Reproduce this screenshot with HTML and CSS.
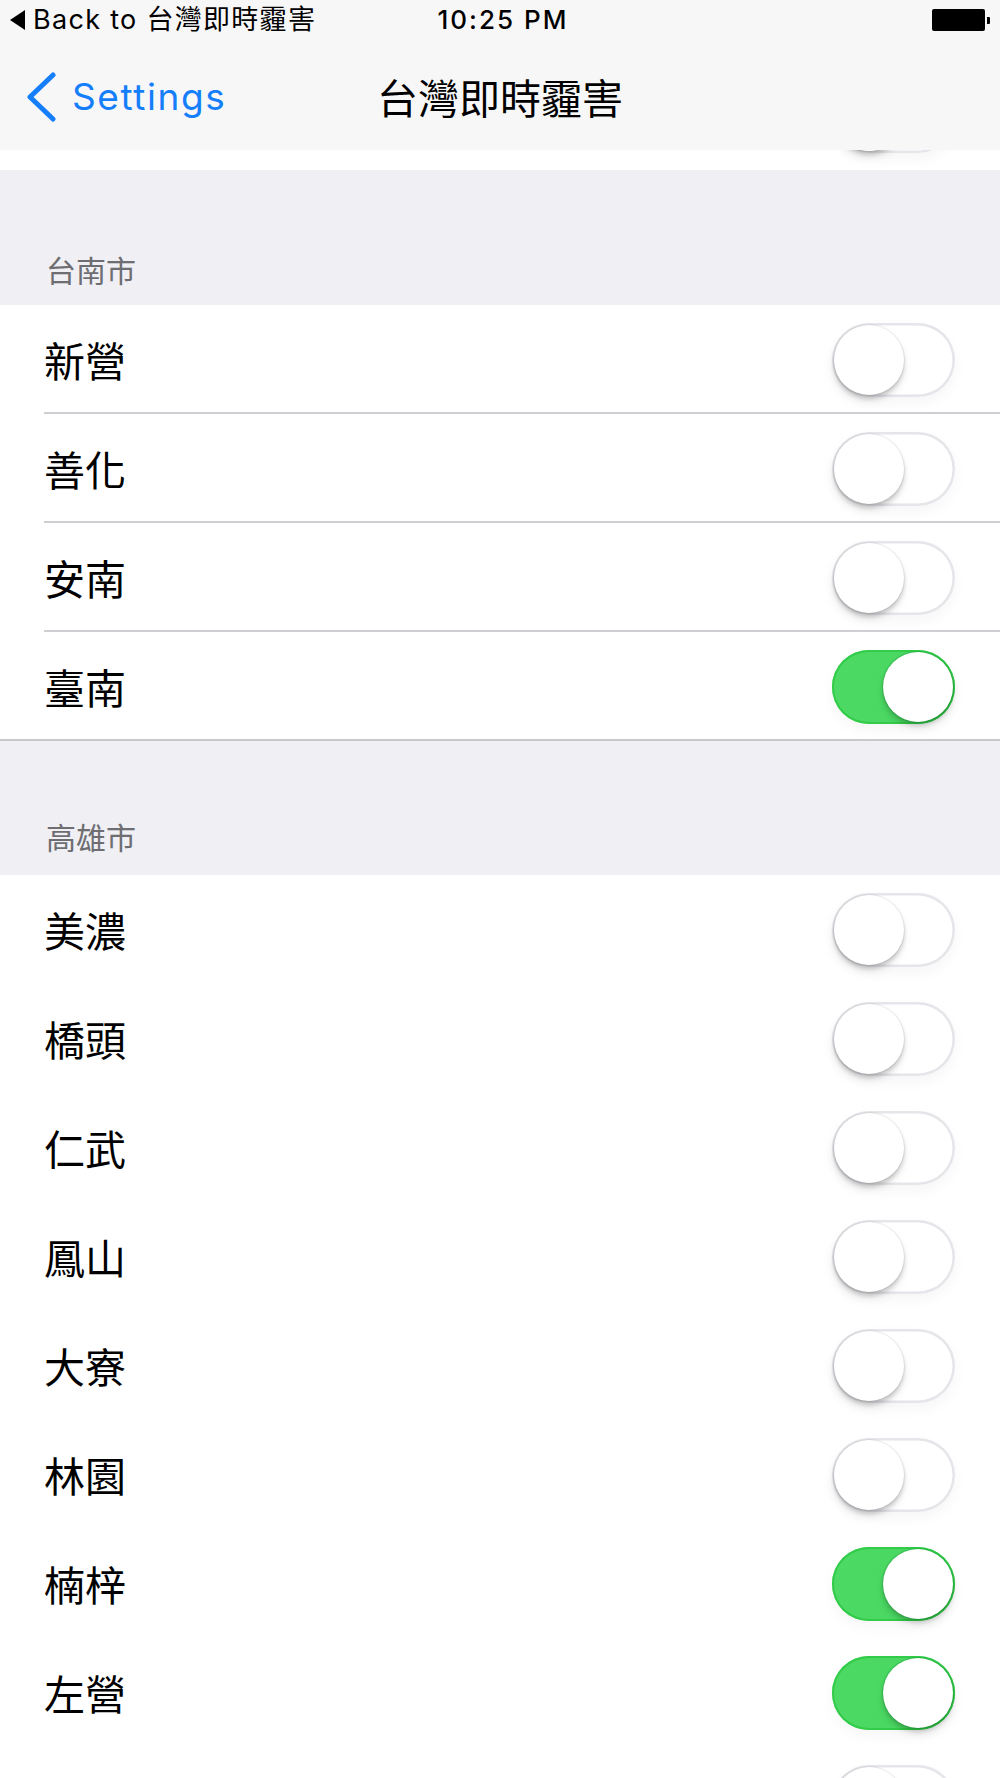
FILE: index.html
```html
<!DOCTYPE html>
<html lang="zh-Hant">
<head>
<meta charset="utf-8">
<title>台灣即時霾害</title>
<link rel="stylesheet" href="styles.css">
</head>
<body>
<div class="screen">
  <header class="top">
    <div class="status">
      <div class="status-left"><span class="tri"></span><span class="back">Back to 台灣即時霾害</span></div>
      <div class="time">10:25 PM</div>
      <div class="status-right"><span class="battery"></span><span class="nub"></span></div>
    </div>
    <nav class="nav">
      <div class="nav-left">
        <svg class="chev" width="32" height="50" viewBox="0 0 32 50"><polyline points="28,3 5,25 28,47" fill="none" stroke="#147efb" stroke-width="5" stroke-linecap="round" stroke-linejoin="round"/></svg>
        <span class="nav-back">Settings</span>
      </div>
      <div class="nav-title">台灣即時霾害</div>
      <div></div>
    </nav>
  </header>

  <div class="peek">
    <div class="row row-plain"><span class="label"></span><span class="switch"><span class="knob"></span></span></div>
  </div>

  <div class="section-header">台南市</div>
  <div class="group lined">
    <div class="row"><span class="label">新營</span><span class="switch"><span class="knob"></span></span></div>
    <div class="row"><span class="label">善化</span><span class="switch"><span class="knob"></span></span></div>
    <div class="row"><span class="label">安南</span><span class="switch"><span class="knob"></span></span></div>
    <div class="row"><span class="label">臺南</span><span class="switch on"><span class="knob"></span></span></div>
  </div>

  <div class="section-header second">高雄市</div>
  <div class="group">
    <div class="row row-plain"><span class="label">美濃</span><span class="switch"><span class="knob"></span></span></div>
    <div class="row row-plain"><span class="label">橋頭</span><span class="switch"><span class="knob"></span></span></div>
    <div class="row row-plain"><span class="label">仁武</span><span class="switch"><span class="knob"></span></span></div>
    <div class="row row-plain"><span class="label">鳳山</span><span class="switch"><span class="knob"></span></span></div>
    <div class="row row-plain"><span class="label">大寮</span><span class="switch"><span class="knob"></span></span></div>
    <div class="row row-plain"><span class="label">林園</span><span class="switch"><span class="knob"></span></span></div>
    <div class="row row-plain"><span class="label">楠梓</span><span class="switch on"><span class="knob"></span></span></div>
    <div class="row row-plain"><span class="label">左營</span><span class="switch on"><span class="knob"></span></span></div>
    <div class="row row-plain"><span class="label"></span><span class="switch"><span class="knob"></span></span></div>
  </div>
</div>
</body>
</html>
```

FILE: styles.css
```css
* { box-sizing: border-box; }

html, body {
  margin: 0;
  padding: 0;
}

body {
  width: 1000px;
  height: 1778px;
  overflow: hidden;
  background: #efeff4;
  font-family: "Inter", "Noto Sans CJK TC", sans-serif;
  color: #000;
}

.screen {
  display: flex;
  flex-direction: column;
}

.top {
  background: #f7f7f7;
}

.status {
  display: grid;
  grid-template-columns: 1fr auto 1fr;
  align-items: center;
  height: 40px;
  padding: 0 10px;
}

.status-left {
  display: flex;
  align-items: center;
  gap: 8px;
}

.tri {
  width: 0;
  height: 0;
  border-top: 10px solid transparent;
  border-bottom: 10px solid transparent;
  border-right: 15px solid #000;
}

.back {
  font-size: 27px;
  line-height: 1.2;
  letter-spacing: 1.3px;
  white-space: nowrap;
}

.time {
  font-size: 26px;
  font-weight: 500;
  letter-spacing: 2px;
  line-height: 1.2;
  padding-left: 6px;
}

.status-right {
  display: flex;
  justify-content: flex-end;
  align-items: center;
  gap: 2px;
}

.battery {
  width: 53px;
  height: 22px;
  background: #000;
  border-radius: 2px;
}

.nub {
  width: 3px;
  height: 7px;
  background: #000;
  border-radius: 0 1px 1px 0;
}

.nav {
  display: grid;
  grid-template-columns: 1fr auto 1fr;
  align-items: center;
  height: 110px;
  padding-top: 4px;
}

.nav-left {
  display: flex;
  align-items: center;
  gap: 15px;
  padding-left: 25px;
}

.chev {
  display: block;
}

.nav-back {
  color: #147efb;
  font-size: 37px;
  letter-spacing: 1.6px;
  line-height: 1.2;
}

.nav-title {
  font-family: "Noto Sans CJK TC", sans-serif;
  font-size: 41px;
  font-weight: 400;
  line-height: 1.2;
}

.peek {
  height: 20px;
  overflow: hidden;
  display: flex;
  flex-direction: column;
  justify-content: flex-end;
  background: #fff;
}

.peek .row {
  flex-shrink: 0;
  padding-left: 44px;
}

.section-header {
  height: 135px;
  display: flex;
  align-items: flex-end;
  padding: 0 0 18px 46px;
  color: #6d6d72;
  font-family: "Noto Sans CJK TC", sans-serif;
  font-size: 30px;
  line-height: 36px;
}

.section-header.second {
  height: 134px;
  padding-bottom: 21px;
}

.group {
  background: #fff;
  padding-left: 44px;
}

.group.lined {
  border-bottom: 2px solid #c8c7cc;
}

.row {
  display: flex;
  align-items: center;
  justify-content: space-between;
  height: 109px;
  padding-right: 45px;
}

.group.lined .row {
  height: 109px;
  border-bottom: 2px solid #cfced3;
  padding-top: 2px;
}

.group.lined .row:last-child {
  height: 107px;
  border-bottom: none;
}

.label {
  font-family: "Noto Sans CJK TC", sans-serif;
  font-size: 41px;
  line-height: 1.2;
  color: #000;
}

.switch {
  width: 123px;
  height: 74px;
  border-radius: 37px;
  padding: 2px;
  display: flex;
  align-items: center;
  justify-content: flex-start;
  background: #fff;
  box-shadow: inset 0 0 0 2.5px #e5e5ea, 0 6px 14px rgba(0, 0, 0, 0.04);
  flex-shrink: 0;
}

.switch.on {
  justify-content: flex-end;
  background: linear-gradient(90deg, #4cd964 0%, #4ad862 60%, #3fd158 100%);
  box-shadow: inset 0 0 0 2px #33cc4a, 0 6px 14px rgba(0, 0, 0, 0.04);
}

.knob {
  width: 70px;
  height: 70px;
  border-radius: 50%;
  background: #fff;
  box-shadow: 0 4px 4px rgba(0, 0, 0, 0.16), 0 0 1px 1px rgba(0, 0, 0, 0.07), 0 6px 10px rgba(0, 0, 0, 0.08);
}

.switch.on .knob {
  box-shadow: 0 4px 4px rgba(0, 0, 0, 0.14), 0 0 1px 1px rgba(0, 120, 30, 0.25), 0 6px 10px rgba(0, 0, 0, 0.08);
}
```
